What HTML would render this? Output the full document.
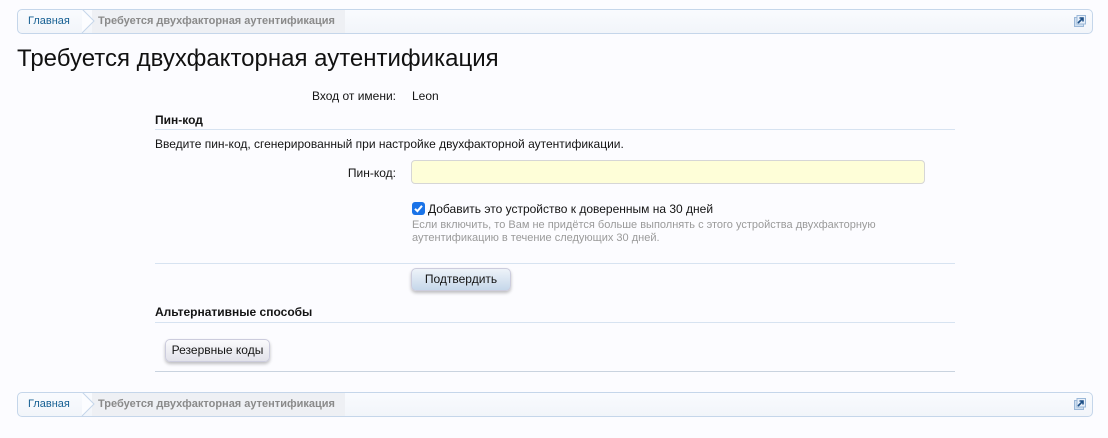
<!DOCTYPE html>
<html><head><meta charset="utf-8"><style>
body{margin:0;width:1108px;height:438px;background:#fcfcff;font-family:"Liberation Sans",Arial,sans-serif;position:relative;overflow:hidden;color:#141414}
.a{position:absolute;white-space:nowrap}
.bc{position:absolute;left:17px;width:1074px;height:23px;border:1px solid #c5d6ea;border-radius:5px;background:linear-gradient(#f9fbfe,#f2f5fa)}
.bc .h{position:absolute;left:10px;top:5px;font-size:11px;color:#176093}
.bc .ch{position:absolute;left:60px;top:-1px;width:24px;height:24px}
.bc .c{position:absolute;left:74px;top:0;height:23px;padding:0 10px 0 6px;background:#eef0f4;line-height:23px;font-size:11px;font-weight:bold;color:#8a8a8a}
.bc .e{position:absolute;right:6px;top:5px;width:12px;height:12px}
.line{position:absolute;left:155px;width:800px;height:1px;background:#d7e3f1}
.btn{position:absolute;height:21px;border-radius:5px;border:1px solid #ccd;font-size:12px;line-height:21px;text-align:center;box-shadow:0 2px 3px rgba(0,0,0,.25)}
</style></head><body>
<div class="bc" style="top:9px">
<span class="h">Главная</span>
<span class="c">Требуется двухфакторная аутентификация</span>
<svg class="ch" viewBox="0 0 24 24" style="left:62px"><path d="M2 0 L14 12 L2 24" fill="#fcfdff" stroke="#c5d6ea"/></svg>
<svg class="e" viewBox="0 0 12 12"><rect x="0.5" y="2.5" width="9" height="9" fill="#cfdff0" stroke="#9bb8d8"/><rect x="3" y="0.5" width="8.5" height="8.5" fill="#e8f0fa" stroke="#9bb8d8"/><path d="M4 8 L9 3 M5.5 3 H9 V6.5" stroke="#1d4f86" stroke-width="1.6" fill="none"/></svg>
</div>
<div class="a" style="left:17px;top:45px;font-size:24px;color:#111">Требуется двухфакторная аутентификация</div>
<div class="a" style="left:200px;width:196px;text-align:right;top:89px;font-size:12px">Вход от имени:</div>
<div class="a" style="left:412px;top:89px;font-size:12px">Leon</div>
<div class="a" style="left:155px;top:113px;font-size:12px;font-weight:bold">Пин-код</div>
<div class="line" style="top:129px"></div>
<div class="a" style="left:155px;top:137px;font-size:12px">Введите пин-код, сгенерированный при настройке двухфакторной аутентификации.</div>
<div class="a" style="left:200px;width:196px;text-align:right;top:166px;font-size:12px">Пин-код:</div>
<div style="position:absolute;left:411px;top:160px;width:512px;height:22px;border:1px solid #d6d6d6;border-radius:4px;background:#fefed8"></div>
<div style="position:absolute;left:412px;top:202px;width:13px;height:13px;border-radius:3px;background:#1a73e8"><svg viewBox="0 0 13 13" width="13" height="13"><path d="M3 6.8 L5.4 9.2 L10 3.8" stroke="#fff" stroke-width="2" fill="none"/></svg></div>
<div class="a" style="left:428px;top:202px;font-size:12px">Добавить это устройство к доверенным на 30 дней</div>
<div class="a" style="left:412px;top:219px;font-size:11px;color:#9a9a9a;line-height:13px">Если включить, то Вам не придётся больше выполнять с этого устройства двухфакторную<br>аутентификацию в течение следующих 30 дней.</div>
<div class="line" style="top:263px"></div>
<div class="btn" style="left:411px;top:268px;width:98px;background:linear-gradient(#eef3f9,#c5d7ea)">Подтвердить</div>
<div class="a" style="left:155px;top:305px;font-size:12px;font-weight:bold">Альтернативные способы</div>
<div class="line" style="top:322px"></div>
<div class="btn" style="left:165px;top:339px;width:103px;background:linear-gradient(#fafafc,#e2e2ea)">Резервные коды</div>
<div class="line" style="top:371px;background:#c9d3df"></div>
<div class="bc" style="top:392px">
<span class="h">Главная</span>
<span class="c">Требуется двухфакторная аутентификация</span>
<svg class="ch" viewBox="0 0 24 24" style="left:62px"><path d="M2 0 L14 12 L2 24" fill="#fcfdff" stroke="#c5d6ea"/></svg>
<svg class="e" viewBox="0 0 12 12"><rect x="0.5" y="2.5" width="9" height="9" fill="#cfdff0" stroke="#9bb8d8"/><rect x="3" y="0.5" width="8.5" height="8.5" fill="#e8f0fa" stroke="#9bb8d8"/><path d="M4 8 L9 3 M5.5 3 H9 V6.5" stroke="#1d4f86" stroke-width="1.6" fill="none"/></svg>
</div>
</body></html>
